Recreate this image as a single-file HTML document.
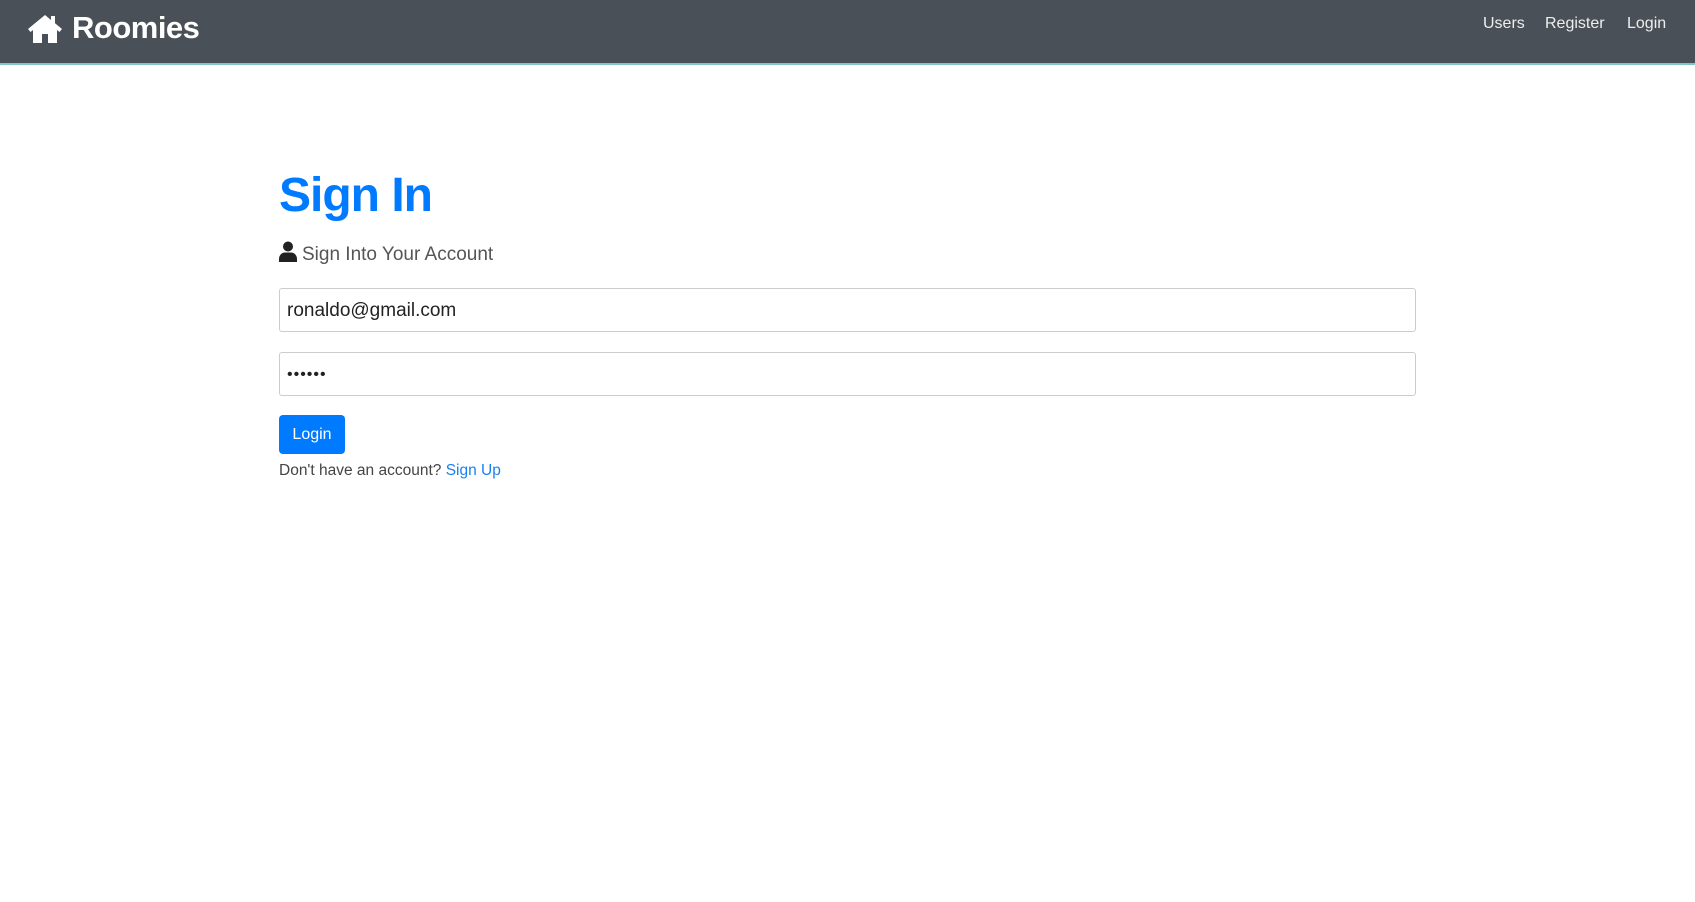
<!DOCTYPE html>
<html><head><style>
body{margin:0;width:1695px;height:902px;background:#fff;font-family:"Liberation Sans",sans-serif;overflow:hidden}
.nav{position:absolute;left:0;top:0;width:1695px;height:63px;background:#495057;border-bottom:2px solid #7fc7c9}
.brand{position:absolute;left:27px;top:10px;color:#fff;font-size:31px;font-weight:bold;display:flex;align-items:center;letter-spacing:-0.5px}
.brand svg{margin-right:9px}
.links{position:absolute;top:15px;font-size:16px;color:#eee}
.links span{position:absolute;white-space:nowrap}
h1{position:absolute;top:168px;margin:0;font-size:48px;color:#007bff;font-weight:bold;letter-spacing:-1px}
.sub{position:absolute;top:241px;font-size:19px;color:#555;}
.inp{position:absolute;left:279px;width:1137px;height:44px;border:1px solid #ccc;border-radius:3px;box-sizing:border-box;font-size:19px;color:#222;padding-left:7px;line-height:44px}
.btn{position:absolute;left:279px;top:415px;width:66px;height:39px;background:#007bff;border-radius:4px;color:#fff;font-size:16px;text-align:center;line-height:39px}
.foot{position:absolute;left:279px;top:462px;font-size:15.5px;color:#444}
.foot a{color:#1a7ff0;text-decoration:none}
</style></head><body>
<div class="nav">
 <div class="brand"><svg width="36" height="32" viewBox="0 0 36 32"><path d="M18 3L1 17l2.5 3L6 18v13h9v-9h6v9h9V18l2.5 2 2.5-3-7-5.8V4h-4v4L18 3z" fill="#fff"/></svg>Roomies</div>
 <div class="links"><span style="left:1483px">Users</span><span style="left:1545px">Register</span><span style="left:1627px">Login</span></div>
</div>
<h1 style="left:279px">Sign In</h1>
<div class="sub" style="left:279px"><svg width="18" height="21" viewBox="0 0 18 21" style="vertical-align:-2px;margin-right:5px"><circle cx="9" cy="5.5" r="5" fill="#222"/><path d="M0 21v-3c0-4 3-6.5 6-6.5h6c3 0 6 2.5 6 6.5v3z" fill="#222"/></svg>Sign Into Your Account</div>
<div class="inp" style="top:288px">ronaldo@gmail.com</div>
<div class="inp" style="top:352px;font-size:16px;letter-spacing:1px">••••••</div>
<div class="btn">Login</div>
<div class="foot">Don't have an account? <a>Sign Up</a></div>
</body></html>
